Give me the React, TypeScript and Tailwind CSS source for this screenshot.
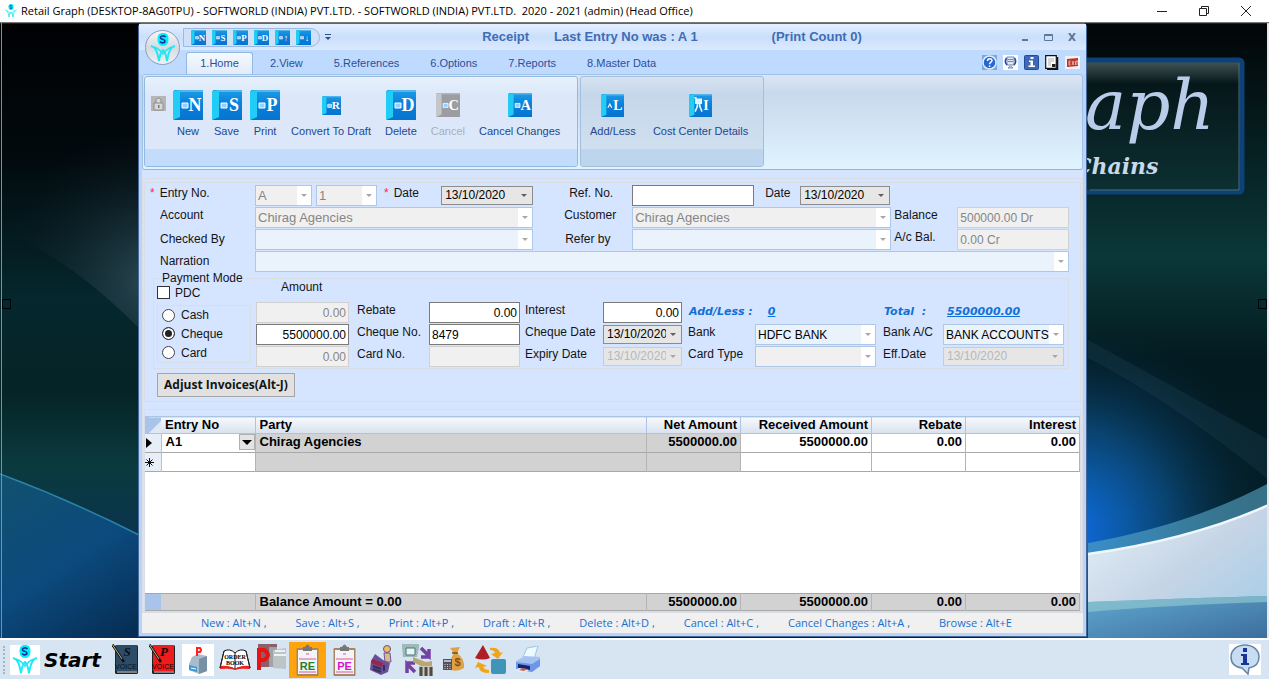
import type { ReactNode } from "react";

const ARIAL = "font-['Liberation_Sans',Arial,sans-serif]";
const SEGOE = "font-['Open_Sans','Noto_Sans',sans-serif]";

function SoftworldLogo({ className }: { className: string }) {
  return (
    <svg viewBox="0 0 30 30" className={className} aria-hidden="true">
      <path d="M15 0c4 0 5.500 2 5.500 6S19 13 15 13s-5.500-3-5.500-7S11 0 15 0z" fill="#00f0f8" />
      <path d="M17.500 4c-2-2-5.500-1-5 1 .5 1.500 4.500 1 4.500 3.200 0 2-3.500 2.200-5 .4" fill="none" stroke="#12309c" strokeWidth="1.600" />
      <path d="M3 13c5 1 6.500 7 8 15 .8-6 1.500-9 4-11 2.500 2 3.200 5 4 11 1.500-8 3-14 8-15" fill="none" stroke="#22e8f6" strokeWidth="2" />
      <path d="M6 14c5 2 7 4 9 7 2-3 4-5 9-7" fill="none" stroke="#22e8f6" strokeWidth="1.500" />
    </svg>
  );
}

function BookIcon({ letter, className, gray = false, mark = "box" }: { letter: string; className: string; gray?: boolean; mark?: string }) {
  return (
    <svg viewBox="0 0 30 30" className={className} aria-hidden="true">
      <defs>
        <linearGradient id="bookBlue" x1="0" y1="0" x2="0" y2="1">
          <stop offset="0" stopColor="#1c9be6" />
          <stop offset="0.450" stopColor="#0a80dc" />
          <stop offset="1" stopColor="#0674cf" />
        </linearGradient>
      </defs>
      <rect x="1" y="0" width="29" height="30" fill={gray ? "#9a9da2" : "url(#bookBlue)"} />
      <path d="M0 1l7-1v27l-7 3z" fill={gray ? "#c3c6ca" : "#22cdf5"} />
      <path d="M7 0h23v2H7z" fill={gray ? "#b2b5b9" : "#57b4ea"} />
      {mark === "box" && <path d="M9 13h6v5H9z" fill="#8ed0ff" stroke="#fff" strokeWidth="1" />}
      {mark === "caret" && <path d="M9 18l2.500-5 2.500 5" fill="none" stroke="#fff" strokeWidth="1.500" />}
      {mark === "cost" && <path d="M9 7h7v5H9zM7 5h3M11 12v4l-3 7M14 12v4l3 7" fill="#d9efff" stroke="#e8f6ff" strokeWidth="2" />}
      <text x="22" y="21" textAnchor="middle" fontSize="18" fontWeight="bold" fontFamily="Liberation Serif, serif" fill="#fff">
        {letter}
      </text>
    </svg>
  );
}

function Wallpaper() {
  return (
    <svg viewBox="0 22 1269 616" preserveAspectRatio="none" className="absolute inset-0 h-full w-full" aria-hidden="true">
      <defs>
        <linearGradient id="leftDark" x1="0" y1="0" x2="0" y2="1">
          <stop offset="0" stopColor="#000103" />
          <stop offset="0.220" stopColor="#020a0e" />
          <stop offset="0.450" stopColor="#05272d" />
          <stop offset="0.600" stopColor="#052427" />
          <stop offset="0.720" stopColor="#0a3a3e" />
          <stop offset="0.850" stopColor="#0a3350" />
          <stop offset="1" stopColor="#0a2440" />
        </linearGradient>
        <linearGradient id="leftBlue" x1="0" y1="474" x2="120" y2="660" gradientUnits="userSpaceOnUse">
          <stop offset="0" stopColor="#12516e" />
          <stop offset="0.500" stopColor="#0c4a7e" />
          <stop offset="1" stopColor="#05294d" />
        </linearGradient>
        <radialGradient id="leftGlow" cx="150" cy="280" r="150" gradientUnits="userSpaceOnUse">
          <stop offset="0" stopColor="#34505c" stopOpacity="0.800" />
          <stop offset="1" stopColor="#0d1c24" stopOpacity="0" />
        </radialGradient>
        <linearGradient id="rightDark" x1="0" y1="0" x2="0" y2="1">
          <stop offset="0" stopColor="#010507" />
          <stop offset="0.280" stopColor="#08292b" />
          <stop offset="0.380" stopColor="#0b3738" />
          <stop offset="0.550" stopColor="#031a20" />
          <stop offset="1" stopColor="#03212b" />
        </linearGradient>
        <radialGradient id="rightBlue" cx="1070" cy="530" r="210" gradientUnits="userSpaceOnUse">
          <stop offset="0" stopColor="#0f6ae0" />
          <stop offset="0.250" stopColor="#0b5aa8" />
          <stop offset="0.500" stopColor="#09416b" />
          <stop offset="1" stopColor="#04202c" stopOpacity="0" />
        </radialGradient>
        <linearGradient id="silver" x1="0" y1="0" x2="1" y2="1">
          <stop offset="0" stopColor="#e6f2fa" />
          <stop offset="0.500" stopColor="#c6d5e6" />
          <stop offset="1" stopColor="#9fcbe6" />
        </linearGradient>
        <linearGradient id="seaFloor" x1="0" y1="0" x2="1" y2="1">
          <stop offset="0" stopColor="#5fa8cf" />
          <stop offset="1" stopColor="#3d6e9d" />
        </linearGradient>
        <linearGradient id="panelShine" x1="0" y1="0" x2="0" y2="1">
          <stop offset="0" stopColor="#47585a" />
          <stop offset="0.180" stopColor="#06171a" />
          <stop offset="1" stopColor="#0c3032" />
        </linearGradient>
      </defs>
      <rect x="0" y="22" width="640" height="616" fill="url(#leftDark)" />
      <path d="M0 232Q60 250 139 328V120H0z" fill="url(#leftGlow)" />
      <path d="M0 474Q70 500 139 535L300 638H0z" fill="url(#leftBlue)" />
      <path d="M0 474Q70 500 139 535" fill="none" stroke="#2a83a6" strokeWidth="1.500" />
      <rect x="640" y="22" width="629" height="616" fill="url(#rightDark)" />
      <rect x="1000" y="320" width="269" height="318" fill="url(#rightBlue)" />
      <path d="M1088 358Q1170 400 1269 480V440Q1180 390 1088 340z" fill="#234c60" opacity="0.250" />
      <path d="M1088 543Q1190 525 1269 483V506Q1190 540 1088 554z" fill="#58a8c8" opacity="0.600" />
      <path d="M1088 554Q1190 540 1269 504V638H1088z" fill="url(#silver)" />
      <path d="M1088 554Q1190 540 1269 505" fill="none" stroke="#eff7fc" strokeWidth="2.500" />
      <path d="M1088 602Q1190 598 1269 596V638H1088z" fill="url(#seaFloor)" />
      <path d="M1088 602Q1190 598 1269 596V602Q1170 605 1088 612z" fill="#8ec4cf" opacity="0.700" />
      <rect x="1000" y="60" width="242" height="132" rx="3" fill="url(#panelShine)" stroke="#0d4179" strokeWidth="5" />
      <path d="M1239 63v127H1090" fill="none" stroke="#4a6a70" strokeWidth="1" />
      <text x="1085" y="129" fontSize="69" fontStyle="italic" fontFamily="DejaVu Serif, serif" fill="#b9cdea">
        aph
      </text>
      <text x="1074" y="174" fontSize="22" fontStyle="italic" fontWeight="bold" fontFamily="DejaVu Serif, serif" fill="#c9d8ea">
        Chains
      </text>
      <path d="M2.500 299.500h8v9h-8zM1258.500 299.500h8v9h-8z" fill="none" stroke="#000" />
      <path d="M1.500 22v616" stroke="#8c8c8c" />
      <path d="M1268 22v616" stroke="#e8e8e8" strokeWidth="2" />
      <path d="M0 22.500h1269" stroke="#777" strokeWidth="1.500" />
    </svg>
  );
}

function Arrow({ dark = false }: { dark?: boolean }) {
  return (
    <svg viewBox="0 0 6 3" className={`h-[3px] w-[6px] shrink-0 ${dark ? "text-[#606060]" : "text-[#a8a8a8]"}`} aria-hidden="true">
      <path d="M0 0h6L3 3z" fill="currentColor" />
    </svg>
  );
}

type ComboProps = { id: string; value?: string; width?: string; muted?: boolean; label?: string };

function Combo({ id, value = "", width = "w-full", muted = false, label }: ComboProps) {
  return (
    <div className={`flex h-[21px] border border-[#aec6e8] ${width} ${muted ? "bg-[#f0f0f0] text-[13px] text-[#868686]" : "bg-[#eaf2fc] text-xs text-black"}`}>
      <select id={id} aria-label={label} defaultValue={value} className="min-w-0 flex-1 appearance-none bg-transparent pl-[2px] pt-[2px] leading-4 outline-none">
        <option>{value}</option>
      </select>
      <span className="flex w-[14px] shrink-0 items-center justify-center bg-white">
        <Arrow />
      </span>
    </div>
  );
}

function DateBox({ id, width = "w-full", off = false }: { id: string; width?: string; off?: boolean }) {
  return (
    <div className={`flex h-[19px] items-center border bg-[#e6e6e6] pr-[5px] ${width} ${off ? "border-[#cccccc] text-[#b8b8b8]" : "border-[#8c8c8c] text-black"}`}>
      <input id={id} defaultValue="13/10/2020" disabled={off} className="mr-1 min-w-0 flex-1 bg-transparent pl-[3px] text-xs leading-4 outline-none" />
      <Arrow dark={!off} />
    </div>
  );
}

function TextBox({ id, value = "", off = false, right = false, width = "w-full", label }: { id: string; value?: string; off?: boolean; right?: boolean; width?: string; label?: string }) {
  return (
    <input
      id={id}
      aria-label={label}
      defaultValue={value}
      disabled={off}
      className={`h-[21px] border px-[2px] pt-[2px] text-xs leading-4 outline-none ${width} ${right ? "text-right" : ""} ${off ? "border-[#d0d0d0] bg-[#f0f0f0] text-[#868686]" : "border-[#7a7a7a] bg-white text-black"}`}
    />
  );
}

function Label({ htmlFor, children, className = "" }: { htmlFor: string; children: ReactNode; className?: string }) {
  return (
    <label htmlFor={htmlFor} className={`whitespace-nowrap pb-1 leading-4 ${className}`}>
      {children}
    </label>
  );
}

const quickIcons = ["N", "S", "P", "D", "↑", "↓"];
const tabs = ["2.View", "5.References", "6.Options", "7.Reports", "8.Master Data"];

function RibbonButton({ text, letter, size, off = false, mark }: { text: string; letter: string; size: string; off?: boolean; mark?: string }) {
  return (
    <button disabled={off} className={`flex flex-col items-center px-[6px] text-[11px] leading-4 ${off ? "text-[#a9afb9]" : "text-[#23478f]"}`}>
      <span className="flex h-[30px] w-6 items-center justify-center">
        <BookIcon letter={letter} className={`shrink-0 ${size}`} gray={off} mark={mark} />
      </span>
      <span className="mt-[3px] whitespace-nowrap">{text}</span>
    </button>
  );
}

function WindowHeader() {
  return (
    <header className="relative">
      <div className="flex h-[26px] items-center bg-linear-to-b from-[#e3efff] via-[#cadffb] to-[#dbe9fd] pl-[44px] pr-[10px]">
        <div className="flex h-[19px] w-[137px] items-center gap-[6px] rounded-r-full border border-[#9db9df] bg-[#cfe0f7] pl-[7px]">
          {quickIcons.map((letter) => (
            <button key={letter} aria-label={`Quick ${letter}`}>
              <BookIcon letter={letter} className="h-[15px] w-[15px]" />
            </button>
          ))}
        </div>
        <button aria-label="Customize" className="ml-[5px] flex flex-col items-center gap-[2px] text-[#2b4f8f]">
          <span className="h-px w-[6px] bg-[#2b4f8f]" />
          <svg viewBox="0 0 6 3" className="h-[3px] w-[6px]"><path d="M0 0h6L3 3z" fill="currentColor" /></svg>
        </button>
        <h1 className="flex flex-1 justify-center whitespace-pre text-[13px] font-bold leading-4 text-[#3f6db5]">
          <span className="mr-[25px]">Receipt</span>
          <span className="mr-[74px]">Last Entry No was : A 1</span>
          <span className="mr-2">(Print Count 0)</span>
        </h1>
        <div className="flex items-center gap-[15px] text-[#5f7898]">
          <button aria-label="Minimize"><svg viewBox="0 0 8 8" className="h-2 w-2"><path d="M1 6h6v2H1z" fill="currentColor" /></svg></button>
          <button aria-label="Maximize"><svg viewBox="0 0 9 7" className="h-[7px] w-[9px]"><path d="M.5.5h8v6h-8zM.5 1.500h8" fill="none" stroke="currentColor" /></svg></button>
          <button aria-label="Close"><svg viewBox="0 0 8 8" className="h-2 w-2"><path d="M1 0l6 8M7 0L1 8" stroke="currentColor" strokeWidth="2" /></svg></button>
        </div>
      </div>
      <div className="flex h-6 items-end bg-[#bfdaff] pl-[47px] pr-[6px]">
        <button className="h-[22px] w-[67px] rounded-t-[3px] border border-b-0 border-[#93b8e4] bg-linear-to-b from-[#f5f9ff] to-[#e1ebfa] text-[11px] text-[#2b4f96]">
          1.Home
        </button>
        <nav className="flex h-[22px] flex-1 items-center gap-[31px] pl-[17px] text-[11px] text-[#2b4f96]">
          {tabs.map((tab) => (
            <a key={tab} href="#tab" className="whitespace-nowrap">{tab}</a>
          ))}
        </nav>
        <div className="flex items-center gap-[6px] pb-1">
          <svg viewBox="0 0 15 15" className="h-[15px] w-[15px]">
            <path d="M0 0h15v15H0z" fill="#7ba9d8" />
            <circle cx="7.500" cy="7.500" r="6.500" fill="#2867cf" stroke="#e4eefb" strokeWidth="1.500" />
            <path d="M5.500 6c0-3 4.500-3 4.500-.4C10 7.500 7.600 7 7.600 9.300M7.600 10.500v1.500" fill="none" stroke="#fff" strokeWidth="1.500" />
          </svg>
          <svg viewBox="0 0 15 15" className="h-[15px] w-[15px]">
            <path d="M0 0h15v15H0z" fill="#fff" />
            <path d="M4 2h7v8H4zM5 4.500h5M5 6.500h5M5 13l2.500-2 2.500 2z" fill="#dfe8f5" stroke="#7488a8" />
            <path d="M3.500 3Q1 7 4 10M11.500 3Q14 7 11 10" fill="none" stroke="#2a479c" strokeWidth="1.500" />
          </svg>
          <svg viewBox="0 0 15 15" className="h-[15px] w-[15px]">
            <rect x="0.500" y="0.500" width="14" height="14" rx="1" fill="#4068b8" stroke="#244a98" />
            <path d="M6.500 2h3v2h-3zM5 5.500h4v5h2V12H4.500v-1.500h2V7H5z" fill="#fff" />
          </svg>
          <svg viewBox="0 0 14 15" className="h-[15px] w-[14px]">
            <path d="M.7.700h10.600v12.600H.7z" fill="#fff" stroke="#111" strokeWidth="1.200" />
            <path d="M12.500 2v12.300H2" fill="none" stroke="#111" strokeWidth="1.500" />
            <path d="M3 4h6M3 6h6M3 8h3M3 10h3" stroke="#999" strokeWidth="0.800" />
            <path d="M7 9h3.500v3H7z" fill="#222" />
          </svg>
          <svg viewBox="0 0 15 13" className="h-[13px] w-[15px]">
            <path d="M0 0h15v13H0z" fill="#f4f1f1" />
            <path d="M2 3l11-1v8L2 11z" fill="#b93430" />
            <path d="M5.500 5H4v4h1.500M4 7h1.500M7 5l2 4M9 5L7 9M10.500 5v4M11 5h2M12 5v4" fill="none" stroke="#f6dcdc" strokeWidth="0.700" />
          </svg>
        </div>
      </div>
      <button aria-label="Application menu" className="absolute left-[6px] top-[6px] flex h-[35px] w-[35px] items-center justify-center rounded-full border border-[#8d9db6] bg-linear-to-b from-[#f6f7f9] via-[#d5dae3] to-[#f0f2f6]">
        <SoftworldLogo className="h-[30px] w-[30px]" />
      </button>
    </header>
  );
}

function Ribbon() {
  return (
    <div className="flex h-24 gap-[2px] rounded-[3px] border border-[#a2c1e6] border-b-[#8db4e4] bg-linear-to-b from-[#dbe6f4] via-[#c8d9ed] via-20% to-[#e0f4ff] p-px pb-[2px]">
      <section className="flex w-[434px] flex-col overflow-hidden rounded-[3px] border border-[#92b9e2] bg-linear-to-b from-[#e8f1fd] via-[#dce8f9] via-20% to-[#dce8f9]">
        <div className="flex flex-1 items-start pl-[6px] pt-[13px]">
          <svg viewBox="0 0 15 15" className="mt-[6px] h-[15px] w-[15px]">
            <path d="M0 0h15v15H0z" fill="#b5b5b5" />
            <path d="M3 7h9v7H3zM5 7V4Q7.500 0 10 4v3" fill="#d8d8d8" stroke="#8c8c8c" />
            <path d="M7 9h1.500v3H7z" fill="#777" />
          </svg>
          <div className="flex gap-[2px] pl-1">
            <RibbonButton text="New" letter="N" size="h-[30px] w-[30px]" />
            <RibbonButton text="Save" letter="S" size="h-[30px] w-[30px]" />
            <RibbonButton text="Print" letter="P" size="h-[30px] w-[30px]" />
            <RibbonButton text="Convert To Draft" letter="R" size="h-[19px] w-[19px]" />
            <RibbonButton text="Delete" letter="D" size="h-[30px] w-[30px]" />
            <RibbonButton text="Cancel" letter="C" size="h-6 w-6" off />
            <RibbonButton text="Cancel Changes" letter="A" size="h-6 w-6" />
          </div>
        </div>
        <div className="h-[17px] bg-[#c4dcfc]" />
      </section>
      <section className="flex w-[184px] flex-col overflow-hidden rounded-[3px] border border-[#a3bfdd] bg-linear-to-b from-[#d7e3f1] via-[#c6d7eb] via-20% to-[#d2e2f1]">
        <div className="flex flex-1 items-start gap-[5px] pl-[3px] pt-[13px]">
          <RibbonButton text="Add/Less" letter="L" size="h-[23px] w-[23px]" mark="caret" />
          <RibbonButton text="Cost Center Details" letter="I" size="h-[23px] w-[23px]" mark="cost" />
        </div>
        <div className="h-[17px] bg-[#bed5ee]" />
      </section>
    </div>
  );
}

function ReceiptForm() {
  return (
    <form className="border border-[#d9dde6] pb-1 pl-[5px] pr-[11px] pt-px text-xs text-[#141414]">
      <div className="grid auto-rows-[22px] grid-cols-[105px_279fr_99px_260fr_66px_112fr] items-center">
        <Label htmlFor="entry"><span className="mr-[5px] text-red-500">*</span>Entry No.</Label>
        <div className="flex items-center">
          <Combo id="entry" value="A" width="w-[57px]" muted />
          <span className="w-1" />
          <Combo id="entryNo" label="Entry number" value="1" width="w-[61px]" muted />
          <Label htmlFor="date" className="flex-1 pl-[7px]"><span className="mr-[5px] text-red-500">*</span>Date</Label>
          <DateBox id="date" width="w-[92px]" />
        </div>
        <Label htmlFor="ref" className="pl-9">Ref. No.</Label>
        <div className="flex items-center">
          <TextBox id="ref" width="w-[122px]" />
          <Label htmlFor="refDate" className="w-[46px] pl-[11px]">Date</Label>
          <DateBox id="refDate" width="w-[90px]" />
        </div>
        <span />
        <span />

        <Label htmlFor="account" className="pl-[10px]">Account</Label>
        <Combo id="account" value="Chirag Agencies" muted />
        <Label htmlFor="customer" className="pl-[31px]">Customer</Label>
        <Combo id="customer" value="Chirag Agencies" muted />
        <Label htmlFor="balance" className="pl-[3px]">Balance</Label>
        <TextBox id="balance" value="500000.00 Dr" off />

        <label htmlFor="checked" className="pl-[10px]">Checked By</label>
        <Combo id="checked" />
        <label htmlFor="refer" className="pl-8">Refer by</label>
        <Combo id="refer" />
        <Label htmlFor="acBal" className="pl-[3px]">A/c Bal.</Label>
        <TextBox id="acBal" value="0.00 Cr" off />

        <label htmlFor="narration" className="pl-[10px]">Narration</label>
        <div className="col-span-5"><Combo id="narration" /></div>
      </div>

      <fieldset className="ml-[3px] mt-px min-w-0 border border-[#d9dde6] pb-px pl-[3px] pr-1">
        <legend className="ml-[2px] h-[11px] px-[3px] leading-[11px]">Payment Mode</legend>
        <div className="flex h-[17px] items-center">
          <input id="pdc" type="checkbox" className="h-[13px] w-[13px] appearance-none border border-[#333] bg-white" />
          <label htmlFor="pdc" className="w-[107px] pl-[5px]">PDC</label>
          <span className="-mt-3 pl-1">Amount</span>
        </div>
        <div className="flex">
          <div className="mr-[5px] mt-1 flex h-[58px] w-[94px] flex-col justify-around border border-[#d9dde6] pl-1">
            {["Cash", "Cheque", "Card"].map((mode) => (
              <label key={mode} className="flex items-center gap-[6px] leading-4">
                <input
                  type="radio"
                  name="mode"
                  defaultChecked={mode === "Cheque"}
                  className="h-[13px] w-[13px] appearance-none rounded-full border border-[#444] bg-white checked:border-[#333] checked:bg-[#222] checked:shadow-[inset_0_0_0_2px_white]"
                />
                {mode}
              </label>
            ))}
          </div>
          <div className="grid flex-1 auto-rows-[22px] grid-cols-[93px_80px_91px_83px_79px_73px_minmax(0,1fr)_67px_minmax(0,1fr)] items-center">
            <TextBox id="cashAmt" label="Cash amount" value="0.00" off right />
            <Label htmlFor="rebate" className="pl-2">Rebate</Label>
            <TextBox id="rebate" value="0.00" right />
            <Label htmlFor="interest" className="pl-[5px]">Interest</Label>
            <TextBox id="interest" value="0.00" right />
            <div className="col-span-2 whitespace-pre pl-[7px] font-['DejaVu_Sans',sans-serif] text-[11px] font-bold italic text-[#1070d8]">
              Add/Less :<a href="#addless" className="ml-[15px] underline">0</a>
            </div>
            <div className="col-span-2 flex pl-2 font-['DejaVu_Sans',sans-serif] text-[11px] font-bold italic text-[#1070d8]">
              <span className="w-[63px] whitespace-pre">Total  :</span>
              <a href="#total" className="underline">5500000.00</a>
            </div>

            <TextBox id="chequeAmt" label="Cheque amount" value="5500000.00" right />
            <Label htmlFor="chequeNo" className="pl-2">Cheque No.</Label>
            <TextBox id="chequeNo" value="8479" />
            <Label htmlFor="chequeDate" className="pl-[5px]">Cheque Date</Label>
            <DateBox id="chequeDate" />
            <Label htmlFor="bank" className="pl-[6px]">Bank</Label>
            <Combo id="bank" value="HDFC BANK" />
            <Label htmlFor="bankAc" className="pl-[7px]">Bank A/C</Label>
            <Combo id="bankAc" value="BANK ACCOUNTS" />

            <TextBox id="cardAmt" label="Card amount" value="0.00" off right />
            <Label htmlFor="cardNo" className="pl-2">Card No.</Label>
            <TextBox id="cardNo" off />
            <Label htmlFor="expiry" className="pl-[5px]">Expiry Date</Label>
            <DateBox id="expiry" off />
            <Label htmlFor="cardType" className="pl-[6px]">Card Type</Label>
            <Combo id="cardType" muted />
            <Label htmlFor="effDate" className="pl-[7px]">Eff.Date</Label>
            <DateBox id="effDate" off />
          </div>
        </div>
      </fieldset>
      <button type="button" className={`ml-[7px] mt-1 h-6 w-[138px] whitespace-nowrap border border-[#a6a6a6] bg-[#e1e1e1] text-xs font-bold ${SEGOE}`}>
        Adjust Invoices(Alt-J)
      </button>
    </form>
  );
}

function Columns() {
  return (
    <colgroup>
      <col className="w-4" />
      <col className="w-[94px]" />
      <col />
      <col className="w-[94px]" />
      <col className="w-[131px]" />
      <col className="w-[94px]" />
      <col className="w-[114px]" />
    </colgroup>
  );
}

const headCell = "border-r border-[#a9c4e4] pr-[3px] text-right";
const numCell = "border-r border-[#b4b4b4] pr-[3px] text-right align-top";

function EntryGrid() {
  return (
    <div className="flex flex-1 flex-col bg-white text-[13px] font-bold leading-4 text-black">
      <table className="w-full table-fixed border-collapse">
        <Columns />
        <thead>
          <tr className="h-4 border-y border-[#a9c4e4] bg-linear-to-b from-[#f6f9fc] to-[#d9e2ee]">
            <th className="bg-linear-to-br from-[#a9c4ea] from-60% to-[#dfe9f6] to-60%" />
            <th className="border-r border-[#a9c4e4] pl-1 text-left">Entry No</th>
            <th className="border-r border-[#a9c4e4] pl-1 text-left">Party</th>
            <th className={headCell}>Net Amount</th>
            <th className={headCell}>Received Amount</th>
            <th className={headCell}>Rebate</th>
            <th className={headCell}>Interest</th>
          </tr>
        </thead>
        <tbody>
          <tr className="h-[19px] border-b border-[#a8a8a8]">
            <td className="border-r border-[#a9c4e4] bg-[#e6eef7]">
              <svg viewBox="0 0 6 10" className="ml-px h-[10px] w-[6px]"><path d="M0 0l6 5-6 5z" /></svg>
            </td>
            <td className="border-r border-[#b4b4b4] pl-1 align-top">
              <div className="flex justify-between">
                A1
                <button aria-label="Choose entry" className="flex h-4 w-4 items-center justify-center border border-[#b0b0b0] bg-[#e4e4e4]">
                  <svg viewBox="0 0 10 5" className="h-[5px] w-[10px]"><path d="M0 0h10L5 5z" /></svg>
                </button>
              </div>
            </td>
            <td className="border-r border-[#b4b4b4] bg-[#d2d2d2] pl-1 align-top">Chirag Agencies</td>
            <td className={`${numCell} bg-[#d2d2d2]`}>5500000.00</td>
            <td className={numCell}>5500000.00</td>
            <td className={numCell}>0.00</td>
            <td className={numCell}>0.00</td>
          </tr>
          <tr className="h-[19px] border-b border-[#a8a8a8]">
            <td className="border-r border-[#a9c4e4] bg-[#e6eef7]">
              <svg viewBox="0 0 9 9" className="h-[9px] w-[9px]"><path d="M4.500 0v9M0 4.500h9M1.500 1.500l6 6M7.500 1.500l-6 6" stroke="#111" /></svg>
            </td>
            <td className="border-r border-[#b4b4b4]" />
            <td className="border-r border-[#b4b4b4] bg-[#d2d2d2]" />
            <td className={`${numCell} bg-[#d2d2d2]`} />
            <td className={numCell} />
            <td className={numCell} />
            <td className={numCell} />
          </tr>
        </tbody>
      </table>
      <div className="flex-1" />
      <table className="w-full table-fixed border-collapse">
        <Columns />
        <tbody>
          <tr className="h-4 border-y border-[#a8a8a8] bg-[#d2d2d2]">
            <td className="bg-[#a9c4ea]" />
            <td className="border-r border-[#b4b4b4]" />
            <td className="border-r border-[#b4b4b4] pl-1">Balance Amount = 0.00</td>
            <td className={numCell}>5500000.00</td>
            <td className={numCell}>5500000.00</td>
            <td className={numCell}>0.00</td>
            <td className={numCell}>0.00</td>
          </tr>
        </tbody>
      </table>
    </div>
  );
}

const shortcuts = ["New : Alt+N ,", "Save : Alt+S ,", "Print : Alt+P ,", "Draft : Alt+R ,", "Delete : Alt+D ,", "Cancel : Alt+C ,", "Cancel Changes : Alt+A ,", "Browse : Alt+E"];

function InvoiceBook({ letter, fill, ink }: { letter: string; fill: string; ink: string }) {
  return (
    <svg viewBox="0 0 26 31" className="h-[31px] w-[26px]">
      <rect x="3" y="1" width="23" height="29" rx="1.500" fill="#222" />
      <rect x="4" y="1" width="21" height="26" fill={fill} />
      <path d="M5 28h20" stroke="#ddd" />
      <text x="15" y="12" fontSize="13" fontStyle="italic" fontWeight="bold" textAnchor="middle" fontFamily="Liberation Serif, serif" fill={ink}>{letter}</text>
      <text x="14" y="25" fontSize="7" textAnchor="middle" fontFamily="Liberation Sans, sans-serif" fill={ink}>VOICE</text>
      <path d="M0 0l12 18" stroke="#111" strokeWidth="2.500" />
      <path d="M0 0l10 15" stroke="#c8b987" strokeWidth="1" />
    </svg>
  );
}

function Clipboard({ text, fill }: { text: string; fill: string }) {
  return (
    <svg viewBox="0 0 23 32" className="h-8 w-[23px]">
      <rect x="0.500" y="4" width="22" height="28" rx="1" fill="#a9865f" />
      <path d="M2 6h19v24H2z" fill="#f4f4f8" />
      <path d="M7 7V3h2q2.500-5 5 0h2v4z" fill="#777" />
      <path d="M3 15h17M3 28h17M10 10h3" stroke="#d65a98" />
      <text x="11.500" y="26" fontSize="11" fontWeight="bold" textAnchor="middle" fontFamily="Liberation Sans, sans-serif" fill={fill}>{text}</text>
    </svg>
  );
}

const launchers: { name: string; icon: ReactNode }[] = [
  { name: "Sales invoice", icon: <InvoiceBook letter="S" fill="#2c4d68" ink="#0b1218" /> },
  { name: "Purchase invoice", icon: <InvoiceBook letter="P" fill="#ee1c1c" ink="#1a0000" /> },
  {
    name: "POS",
    icon: (
      <svg viewBox="0 0 32 32" className="h-8 w-8">
        <path d="M0 0h32v32H0z" fill="#fff" />
        <path d="M10 13l6-3 9 2v15l-8 3-10-4v-6z" fill="#a9bccb" />
        <path d="M17 15l8-3v15l-8 3z" fill="#7890a3" />
        <path d="M7 21l8 2v5l-8-2z" fill="#3a98dd" />
        <path d="M9 24l5 1" stroke="#fff" />
        <path d="M15 12V4h3q2 2 0 4h-3" fill="none" stroke="#f22" strokeWidth="2" />
      </svg>
    ),
  },
  {
    name: "Order book",
    icon: (
      <svg viewBox="0 0 32 22" className="h-[22px] w-8">
        <path d="M5 2Q11-1 16 4q5-5 11-2l4 17q-9-2-15 1-6-3-15-1z" fill="#fff" stroke="#111" />
        <path d="M1 17q9-1 15 3 6-4 15-3v3q-10-1-15 1-5-2-15-1z" fill="#e22" />
        <path d="M16 4v15M5 2L1 19M27 2l4 17" stroke="#222" />
        <text x="16" y="10" fontSize="6" fontWeight="bold" textAnchor="middle" fontFamily="Liberation Serif, serif">ORDER</text>
        <text x="16" y="16" fontSize="6" fontWeight="bold" textAnchor="middle" fontFamily="Liberation Serif, serif">BOOK</text>
      </svg>
    ),
  },
  {
    name: "Production",
    icon: (
      <svg viewBox="0 0 32 28" className="-mt-1 h-7 w-8">
        <path d="M3 0h19v23H3z" fill="#8c6068" />
        <path d="M14 3h8v20h-8z" fill="#9da3a6" />
        <path d="M18 6l13-2v21l-13-1z" fill="#bdc4c6" />
        <path d="M19 11h12M20 7h10" stroke="#eef1f1" strokeWidth="2" />
        <path d="M4 26V6h5q8 5 0 10H5" fill="none" stroke="#e61414" strokeWidth="4" />
      </svg>
    ),
  },
  { name: "Receipt", icon: <Clipboard text="RE" fill="#21802c" /> },
  { name: "Payment", icon: <Clipboard text="PE" fill="#d515c8" /> },
  {
    name: "Cashier",
    icon: (
      <svg viewBox="0 0 24 32" className="h-8 w-6">
        <circle cx="18" cy="5" r="3.500" fill="#efbc5e" stroke="#665080" />
        <path d="M15 9h6l1 9h-6z" fill="#d8bc86" stroke="#74529c" />
        <path d="M6 10l8 6 7 3-2 9-7 3-11-5 1-9z" fill="#69509a" />
        <path d="M3 15l11 4-1 4-11-4z" fill="#9d2449" />
        <path d="M4 22l8 3M4 25l8 3M15 21v6" stroke="#35305a" strokeWidth="2" />
      </svg>
    ),
  },
  {
    name: "Transfer",
    icon: (
      <svg viewBox="0 0 33 34" className="h-[34px] w-[33px]">
        <path d="M1 1h17v3l-2 10H2L1 4z" fill="#9fb9bb" />
        <path d="M5 5h9v7H5z" fill="#e8f4f2" stroke="#47777b" />
        <path d="M20 5l8 8V6M28 14h-8" fill="none" stroke="#7342a4" strokeWidth="3.500" />
        <path d="M14 29l-8-8v9M5 20h9" fill="none" stroke="#7342a4" strokeWidth="3.500" />
        <path d="M12 14l5 2 8 3 6-1v5l-9 1-10-5z" fill="#b9a674" />
        <path d="M18 23h14v10H18z" fill="#ccc8bd" />
        <path d="M20 24v9M25 24v9M30 24v9" stroke="#4d4a46" strokeWidth="3" />
      </svg>
    ),
  },
  {
    name: "Expenses",
    icon: (
      <svg viewBox="0 0 22 25" className="h-[25px] w-[22px]">
        <path d="M7 1l10-1-3 6q8 6 7 15-6 4-13 2-3-8 3-17z" fill="#dfa145" />
        <path d="M9 6h6" stroke="#7c4a16" strokeWidth="1.500" />
        <text x="14.500" y="19" fontSize="11" fontWeight="bold" textAnchor="middle" fontFamily="Liberation Sans, sans-serif" fill="#8a4b14">$</text>
        <path d="M0 12h9v11H0z" fill="#584f5d" />
        <path d="M1 14h7" stroke="#a9c0d0" strokeWidth="2" />
        <path d="M2 17v5M4.500 17v5M7 17v5" stroke="#d5c3b7" strokeDasharray="1 1" />
      </svg>
    ),
  },
  {
    name: "Convert",
    icon: (
      <svg viewBox="0 0 31 30" className="h-[30px] w-[31px]">
        <path d="M8 0l7 13q-7 3-15 0z" fill="#ad1f24" />
        <path d="M15 3q9-1 10 5l3-1-5 7-7-5 4-1q-1-3-5-3z" fill="#eea51c" />
        <path d="M14 28Q4 28 4 22l-4 1 3-6 9 4-4 1q2 3 6 3z" fill="#eea51c" />
        <rect x="16" y="14" width="15" height="15" rx="2" fill="#3f94b8" />
      </svg>
    ),
  },
  {
    name: "Print",
    icon: (
      <svg viewBox="0 0 28 28" className="h-7 w-7">
        <path d="M10 11L14 2l11-2-4 13z" fill="#eef8ff" stroke="#9ac6e4" />
        <path d="M3 15l9-5 15 1v9l-8 6-16-3z" fill="#a5c3f2" />
        <path d="M3 16l16 2 8-5v7l-8 6-16-3z" fill="#6d97e6" />
        <path d="M5 18l12 2v4L5 22z" fill="#17236f" />
        <path d="M0 25l6-3 10 2-5 3z" fill="#dceaff" />
        <path d="M6 24l5-2 3 1-3 2z" fill="#d05e32" />
      </svg>
    ),
  },
];

function Taskbar() {
  return (
    <footer className="flex h-[41px] items-center border-t-2 border-white bg-[#d7e4f1] pl-[3px] pr-2">
      <span className="mr-1 h-7 w-[3px] border-l-2 border-dotted border-[#a9b4c0]" />
      <button className="flex items-center gap-1">
        <SoftworldLogo className="h-[30px] w-[30px] bg-white" />
        <span className="font-['DejaVu_Sans',sans-serif] text-xl font-bold italic text-black">Start</span>
      </button>
      <div className="ml-[6px] grid w-[438px] grid-cols-12">
        {launchers.map((item) => (
          <button
            key={item.name}
            aria-label={item.name}
            className={`flex h-9 items-center justify-center ${item.name === "Receipt" ? "bg-[#ffa40c]" : ""}`}
          >
            {item.icon}
          </button>
        ))}
      </div>
      <button aria-label="Information" className="ml-auto">
        <svg viewBox="0 0 32 31" className="h-[31px] w-8">
          <path d="M0 0h32v31H0z" fill="#fff" />
          <path d="M16 1c8 0 14 5 14 12 0 6-4 10-10 11l-1 6-6-6C6 23 2 19 2 13 2 6 8 1 16 1z" fill="#c8dcf2" stroke="#6484a8" strokeWidth="1.500" />
          <path d="M14 4h4v4h-4zM12 10h6v9h2v2h-8v-2h2v-7h-2z" fill="#17349b" />
        </svg>
      </button>
    </footer>
  );
}

export default function App() {
  return (
    <div className={`flex min-h-screen flex-col bg-white ${ARIAL}`}>
      <div className="flex h-[22px] items-center pl-1 pr-[18px] text-black">
        <SoftworldLogo className="h-[14px] w-[14px]" />
        <span className={`flex-1 whitespace-pre pl-[3px] text-[11px] ${SEGOE}`}>
          Retail Graph (DESKTOP-8AG0TPU) - SOFTWORLD (INDIA) PVT.LTD. - SOFTWORLD (INDIA) PVT.LTD.  2020 - 2021 (admin) (Head Office)
        </span>
        <div className="flex items-center gap-8">
          <button aria-label="Minimize application"><svg viewBox="0 0 10 10" className="h-[10px] w-[10px]"><path d="M0 5.500h10" stroke="#222" /></svg></button>
          <button aria-label="Restore application"><svg viewBox="0 0 10 10" className="h-[10px] w-[10px]"><path d="M.5 2.500h7v7h-7zM2.500 2.500v-2h7v7h-2" fill="none" stroke="#222" /></svg></button>
          <button aria-label="Close application"><svg viewBox="0 0 10 10" className="h-[10px] w-[10px]"><path d="M0 0l10 10M10 0L0 10" stroke="#222" /></svg></button>
        </div>
      </div>

      <main className="relative flex flex-1 flex-col overflow-hidden pb-px pl-[138px] pr-[182px] pt-px">
        <Wallpaper />
        <div className="relative flex flex-1 flex-col rounded-t-[4px] border border-[#46699c] bg-[#bcd3f5]">
          <WindowHeader />
          <div className="mx-[3px] mb-[3px] flex flex-1 flex-col bg-[#d6e5ff]">
            <Ribbon />
            <div className="mt-2 flex flex-1 flex-col border border-[#d9dde6] px-px pt-[3px]">
              <ReceiptForm />
              <div className="mt-[7px] flex flex-1 flex-col border border-[#d9dde6] pt-[6px]">
                <EntryGrid />
              </div>
            </div>
            <div className={`flex h-5 items-center gap-[29px] overflow-hidden whitespace-nowrap bg-[#f0f0f0] pl-[59px] text-[11px] text-[#1a6fd0] ${SEGOE}`}>
              {shortcuts.map((text) => (
                <span key={text}>{text}</span>
              ))}
            </div>
          </div>
        </div>
      </main>
      <Taskbar />
    </div>
  );
}
